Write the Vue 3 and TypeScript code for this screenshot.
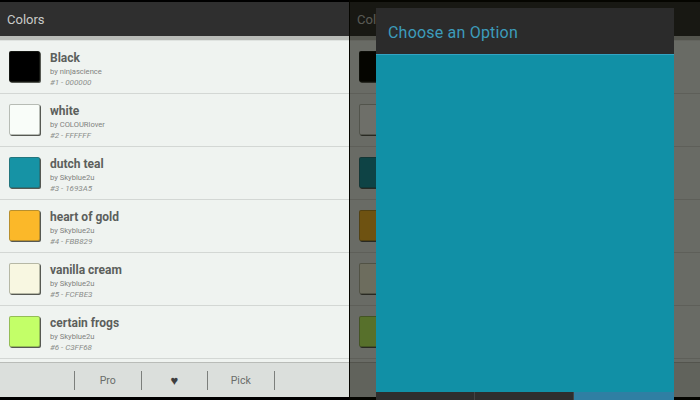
<script setup lang="ts">
interface Color { name: string; by: string; code: string; hex: string }
const colors: Color[] = [
  { name: 'Black', by: 'ninjascience', code: '#1 - 000000', hex: '#000000' },
  { name: 'white', by: 'COLOURlover', code: '#2 - FFFFFF', hex: '#f9fdf9' },
  { name: 'dutch teal', by: 'Skyblue2u', code: '#3 - 1693A5', hex: '#1693a5' },
  { name: 'heart of gold', by: 'Skyblue2u', code: '#4 - FBB829', hex: '#fbb829' },
  { name: 'vanilla cream', by: 'Skyblue2u', code: '#5 - FCFBE3', hex: '#f8f7e1' },
  { name: 'certain frogs', by: 'Skyblue2u', code: '#6 - C3FF68', hex: '#c3ff68' },
]
const panes = ['left', 'right']
</script>

<template>
  <div class="stage">
    <section v-for="pane in panes" :key="pane" class="pane" :class="pane">
      <div class="screen">
        <header class="bar">Colors</header>
        <div class="rule"></div>
        <ul class="list">
          <li v-for="c in colors" :key="c.name" class="row">
            <span class="swatch" :style="{ background: c.hex }"></span>
            <div class="info">
              <div class="name">{{ c.name }}</div>
              <div class="by">by {{ c.by }}</div>
              <div class="code">{{ c.code }}</div>
            </div>
          </li>
        </ul>
        <footer class="foot">
          <span class="cell">Pro</span>
          <span class="cell heart">♥</span>
          <span class="cell">Pick</span>
        </footer>
      </div>
      <template v-if="pane === 'right'">
        <div class="dim"></div>
        <div class="dialog">
          <div class="title">Choose an Option</div>
          <div class="body"></div>
          <div class="actions">
            <span class="act"></span>
            <span class="act"></span>
            <span class="act on"></span>
          </div>
        </div>
      </template>
    </section>
  </div>
</template>

<style>
html, body { margin: 0; background: #000; }
</style>

<style scoped>
.stage {
  display: flex;
  width: 700px;
  height: 400px;
  overflow: hidden;
  background: #000;
  font-family: Roboto, "Liberation Sans", sans-serif;
}
.pane { position: relative; height: 400px; }
.left { width: 349px; overflow: hidden; }
.right { width: 351px; padding-left: 1px; box-sizing: border-box; overflow: hidden; }
.screen {
  width: 350px;
  height: 395px;
  margin-top: 2px;
  display: flex;
  flex-direction: column;
  background: #eff3f0;
}
.bar {
  height: 34px;
  flex: none;
  box-sizing: border-box;
  padding: 10px 0 0 7px;
  background: #2f2f2f;
  color: #c9cbc9;
  font-size: 13px;
  line-height: 16px;
}
.rule { height: 4px; flex: none; background: #b9bcb8; border-bottom: 1px solid #dfe3e0; }
.list { list-style: none; margin: 0; padding: 0; flex: 1; }
.row {
  height: 42px;
  border-bottom: 1px solid #d3d7d4;
  display: flex;
  align-items: flex-start;
  padding: 10px 0 0 9px;
}
.swatch {
  width: 31px;
  height: 31px;
  flex: none;
  border-radius: 2px;
  border: 1px solid rgba(60, 65, 55, 0.35);
  box-sizing: border-box;
  box-shadow: 1px 1px 0 #565953;
}
.info { margin-left: 10px; }
.name { font-size: 12px; font-weight: 700; line-height: 14px; color: #5c5f5c; }
.by { font-size: 7.6px; line-height: 11px; margin-top: 1px; color: #7f827f; }
.code { font-size: 8px; line-height: 11px; font-style: italic; color: #8a8d8a; }
.foot {
  height: 34px;
  flex: none;
  display: flex;
  align-items: center;
  padding-left: 74px;
  background: #dbdfdc;
  border-top: 1px solid #b9bcb8;
}
.cell {
  width: 66.5px;
  height: 19px;
  box-sizing: border-box;
  line-height: 19px;
  text-align: center;
  font-size: 10.5px;
  color: #6a6d6a;
  border-left: 1px solid #7c7f7c;
}
.cell:last-child { width: 67.5px; border-right: 1px solid #7c7f7c; }
.heart { font-size: 13px; color: #3f3f3f; }
.dim { position: absolute; inset: 0; background: rgba(8, 8, 0, 0.58); }
.dialog {
  position: absolute;
  left: 27px;
  top: 8px;
  width: 298px;
  height: 392px;
  display: flex;
  flex-direction: column;
  background: #2b2b2b;
}
.title {
  height: 47px;
  flex: none;
  box-sizing: border-box;
  padding: 15px 0 0 12px;
  font-size: 16px;
  line-height: 20px;
  letter-spacing: 0.2px;
  color: #3d9cbb;
  border-bottom: 1px solid #33a4c4;
}
.body { flex: 1; background: #1190a6; }
.actions { height: 8px; flex: none; display: flex; }
.act { width: 99px; box-sizing: border-box; background: #2e2e2e; border-right: 1px solid #444; }
.act.on { flex: 1; background: #2f7fa3; border: 0; }
</style>
